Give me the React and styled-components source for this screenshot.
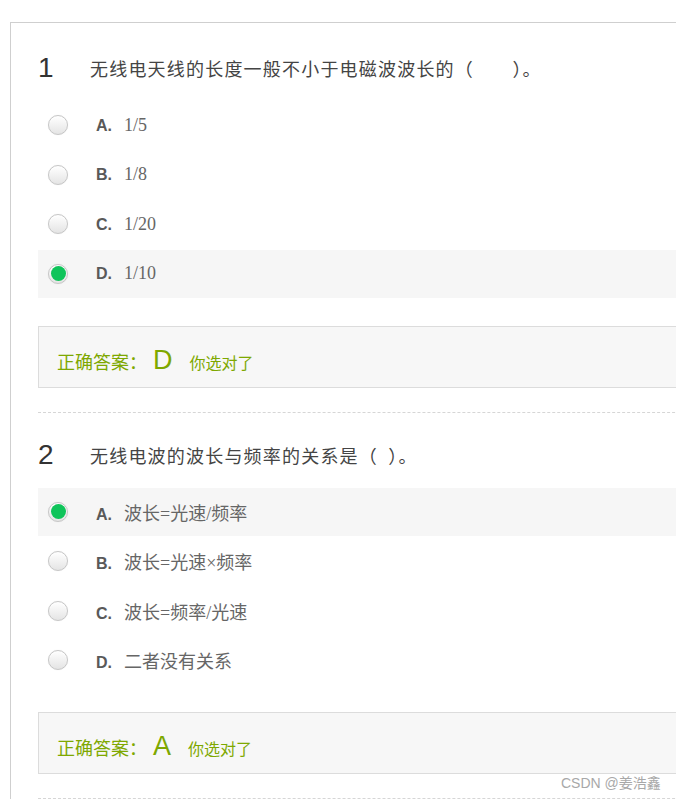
import React from 'react';
import styled, { createGlobalStyle } from 'styled-components';

const GlobalStyle = createGlobalStyle`
  html, body {
    margin: 0;
    padding: 0;
    background: #fff;
    overflow: hidden;
  }
  body {
    font-family: "Liberation Sans", Arial, "Noto Sans CJK SC", sans-serif;
  }
`;

const questions = [
  {
    num: 1,
    title: '无线电天线的长度一般不小于电磁波波长的（\u3000\u3000）。',
    options: [
      { key: 'A', text: '1/5' },
      { key: 'B', text: '1/8' },
      { key: 'C', text: '1/20' },
      { key: 'D', text: '1/10' },
    ],
    picked: 'D',
    answer: 'D',
  },
  {
    num: 2,
    title: '无线电波的波长与频率的关系是（\u2002）。',
    options: [
      { key: 'A', text: '波长=光速/频率' },
      { key: 'B', text: '波长=光速×频率' },
      { key: 'C', text: '波长=频率/光速' },
      { key: 'D', text: '二者没有关系' },
    ],
    picked: 'A',
    answer: 'A',
  },
];

const Page = styled.div`
  position: relative;
  margin: 22px 0 0 10px;
  width: 720px;
  height: 800px;
  border-top: 1px solid #cfcfcf;
  border-left: 1px solid #cfcfcf;
  padding-left: 27px;
  box-sizing: border-box;
`;

const Question = styled.div`
  padding-top: ${(p) => p.$top}px;
  padding-bottom: 24px;
  border-bottom: 1px dashed #d6d6d6;
`;

const TitleRow = styled.div`
  display: flex;
  align-items: center;
  height: 40px;
  margin-bottom: 13px;
`;

const Num = styled.span`
  width: 52px;
  font-family: "Liberation Sans", Arial, sans-serif;
  font-size: 28px;
  color: #333;
`;

const Title = styled.span`
  font-family: "Liberation Serif", "Noto Sans CJK SC", serif;
  font-size: 18px;
  letter-spacing: 1.2px;
  color: #444;
`;

const Option = styled.div`
  display: flex;
  align-items: center;
  height: 48px;
  margin-bottom: 1.5px;
  padding-left: 10px;
  background: ${(p) => (p.$active ? '#f6f6f6' : 'transparent')};
`;

const Radio = styled.span`
  position: relative;
  width: 18px;
  height: 18px;
  border-radius: 50%;
  border: 1px solid #c6c6c6;
  background: linear-gradient(#ffffff, #e4e4e4);
  box-shadow: inset 0 1px 1px rgba(255, 255, 255, 0.9), 0 0 1px rgba(0, 0, 0, 0.12);
  flex-shrink: 0;

  &::after {
    content: '';
    display: ${(p) => (p.$checked ? 'block' : 'none')};
    position: absolute;
    left: 1.5px;
    top: 1.5px;
    width: 15px;
    height: 15px;
    border-radius: 50%;
    background: #0fc45a;
  }
`;

const Label = styled.span`
  display: flex;
  align-items: baseline;
  margin-left: 28px;
`;

const Letter = styled.span`
  width: 28px;
  font-family: "Liberation Sans", Arial, sans-serif;
  font-weight: bold;
  font-size: 16px;
  color: #595959;
`;

const OptText = styled.span`
  font-family: "Liberation Serif", "Noto Sans CJK SC", serif;
  font-size: 18px;
  color: #666;
`;

const AnswerBox = styled.div`
  display: flex;
  align-items: baseline;
  margin-top: 28px;
  height: 60px;
  box-sizing: content-box;
  padding: 0 18px;
  line-height: 66px;
  border: 1px solid #dcdcdc;
  background: #f7f7f7;
  color: #7ea800;
  font-family: "Noto Sans CJK SC", "Liberation Sans", sans-serif;
`;

const AnsLabel = styled.span`
  font-size: 18px;
`;

const AnsLetter = styled.span`
  font-family: "Liberation Sans", Arial, sans-serif;
  font-size: 27px;
  margin: 0 17px 0 6px;
`;

const AnsNote = styled.span`
  font-size: 16px;
`;

const Watermark = styled.span`
  position: absolute;
  left: 550px;
  top: 749px;
  font-family: "Liberation Sans", "Noto Sans CJK SC", sans-serif;
  font-size: 14px;
  color: #a8a8a8;
`;

function QuestionBlock({ q, top }) {
  return (
    <Question $top={top}>
      <TitleRow>
        <Num>{q.num}</Num>
        <Title>{q.title}</Title>
      </TitleRow>
      {q.options.map((o) => (
        <Option key={o.key} $active={o.key === q.picked}>
          <Radio $checked={o.key === q.picked} />
          <Label>
            <Letter>{o.key}.</Letter>
            <OptText>{o.text}</OptText>
          </Label>
        </Option>
      ))}
      <AnswerBox>
        <AnsLabel>正确答案：</AnsLabel>
        <AnsLetter>{q.answer}</AnsLetter>
        <AnsNote>你选对了</AnsNote>
      </AnswerBox>
    </Question>
  );
}

export default function App() {
  return (
    <>
      <GlobalStyle />
      <Page>
        <QuestionBlock q={questions[0]} top={25} />
        <QuestionBlock q={questions[1]} top={22} />
        <Watermark>CSDN @姜浩鑫</Watermark>
      </Page>
    </>
  );
}
